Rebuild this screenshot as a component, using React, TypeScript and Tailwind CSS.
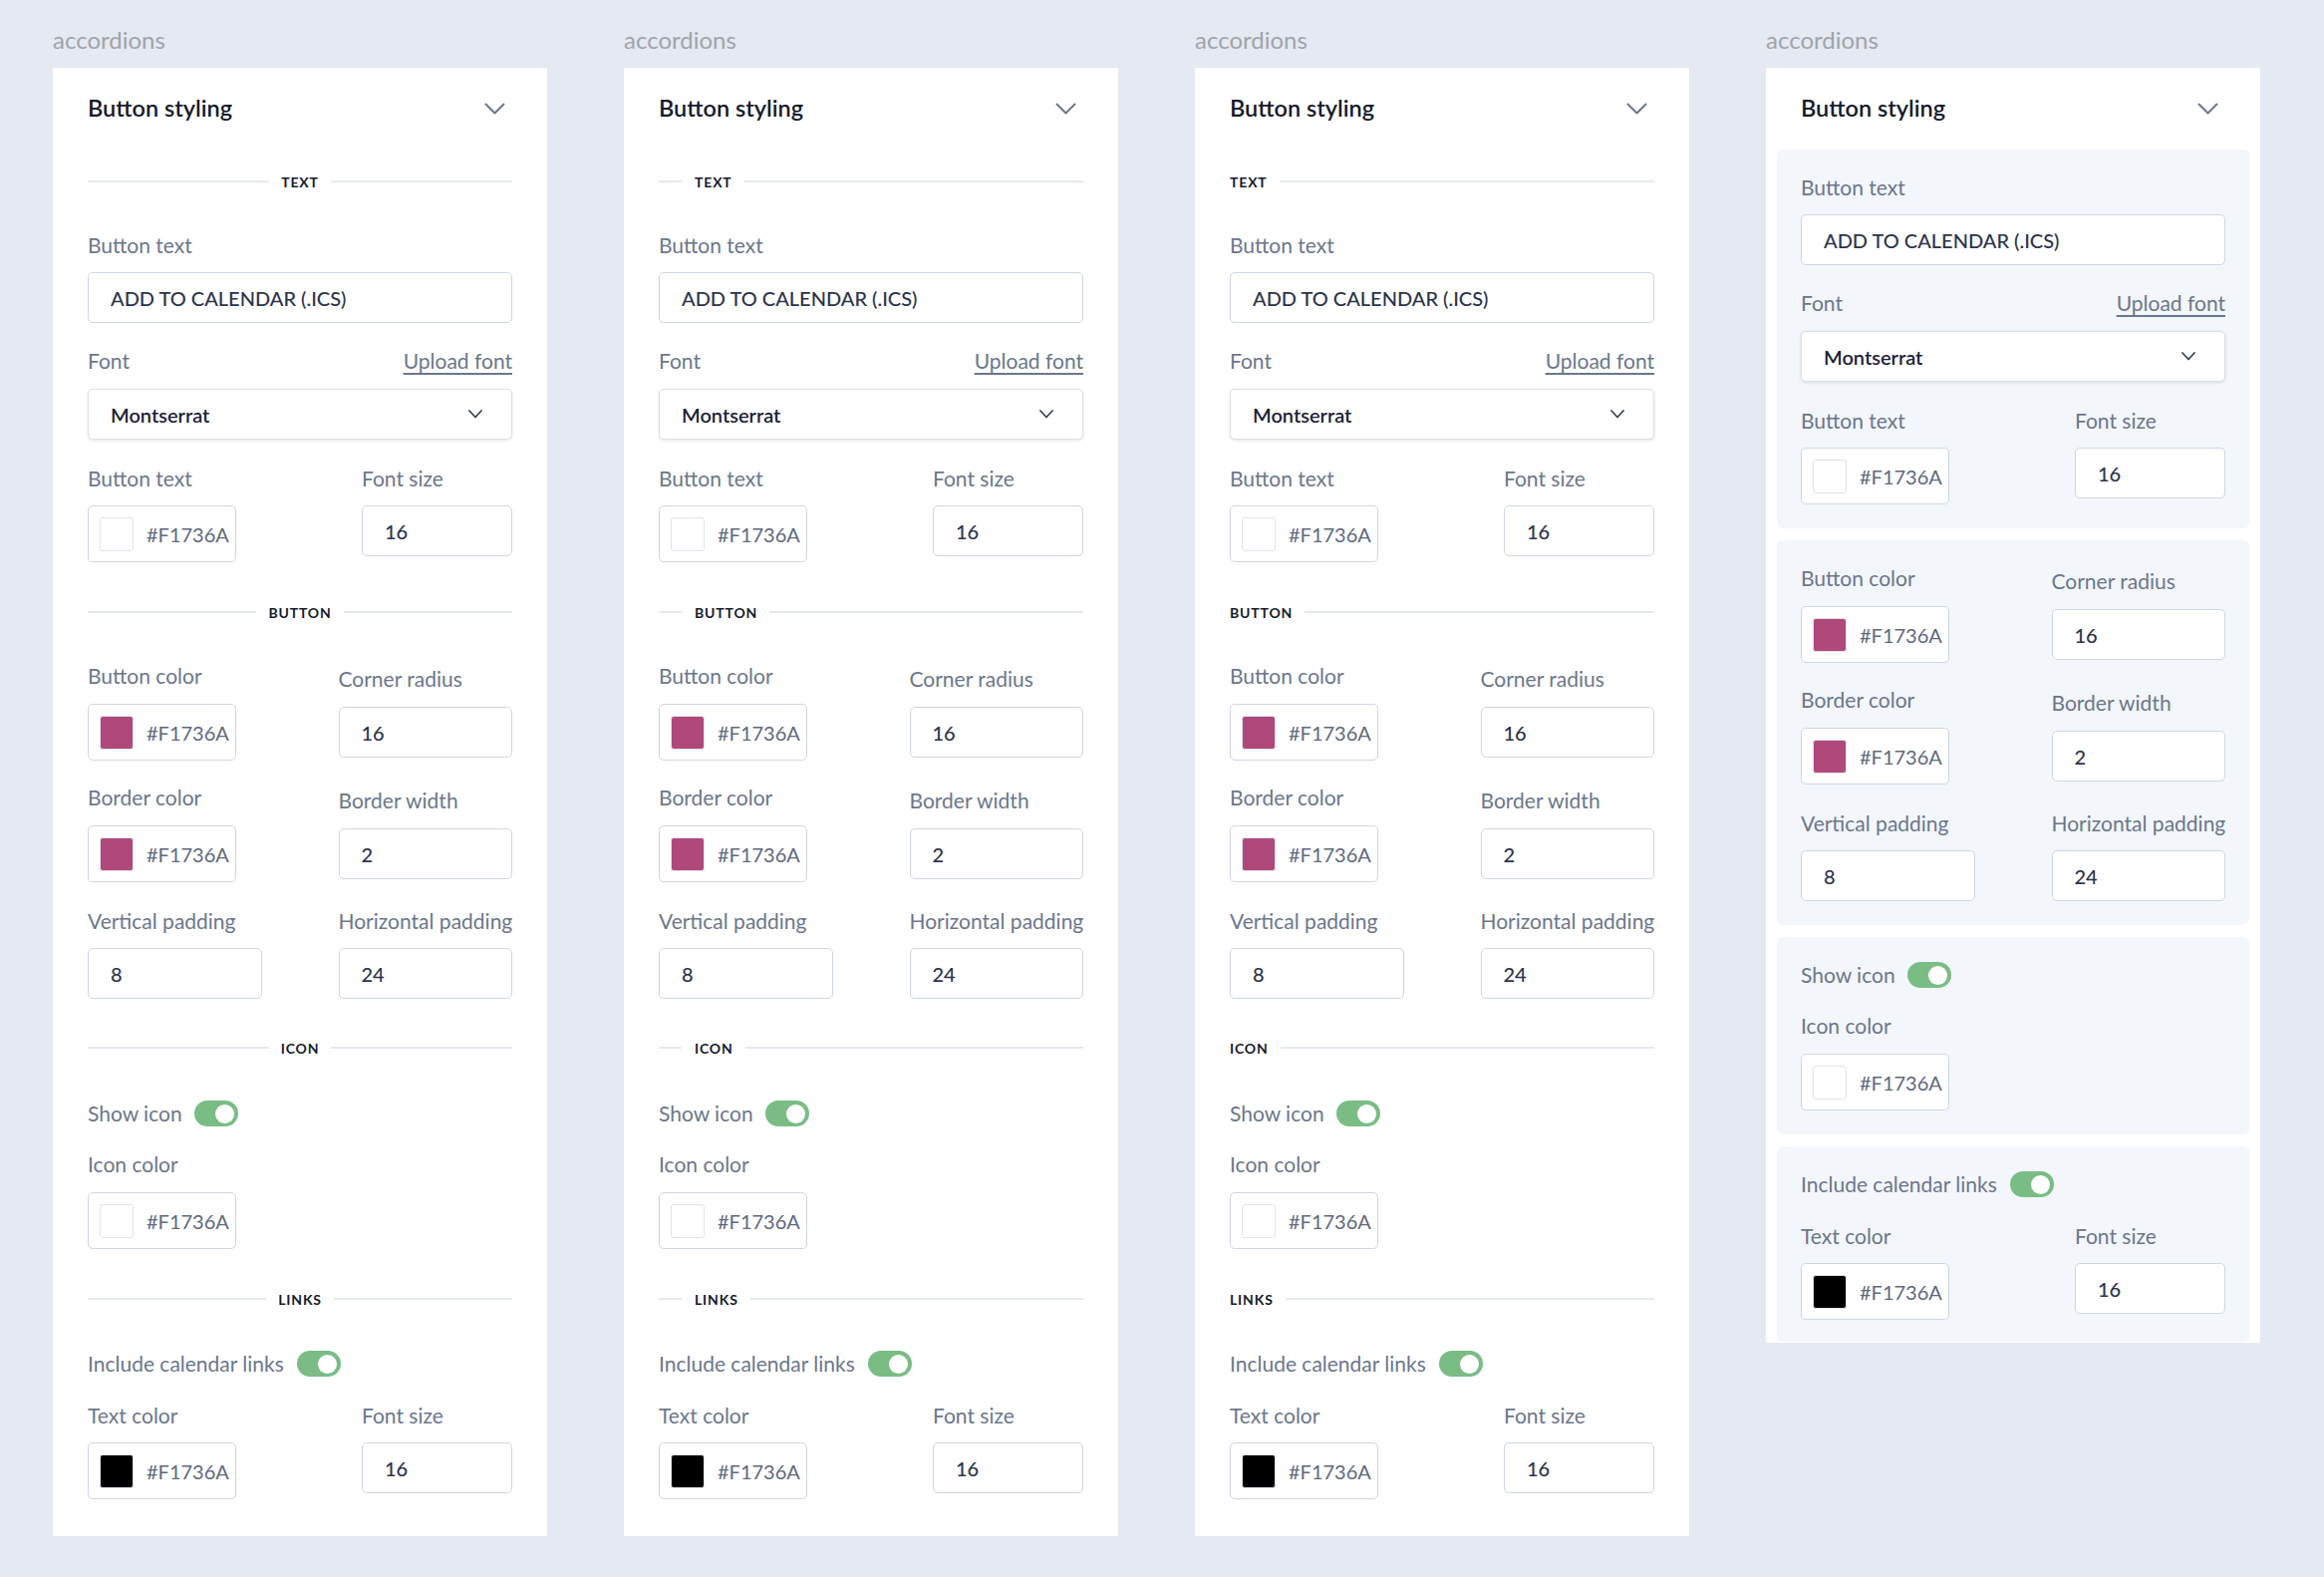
import type { ReactNode } from "react"

type Kind = "center" | "short" | "left"

const Label = ({ children, className = "" }: { children: ReactNode; className?: string }) => (
    <div className={"h-[24px] whitespace-nowrap text-[21px] leading-[24px] text-[#6b778c] " + className}>{children}</div>
)

const TextInput = ({ children, className = "" }: { children: ReactNode; className?: string }) => (
    <div
        className={
            "flex h-[51px] items-center rounded-[5px] border border-[#cfd6e5] bg-white px-[22px] text-[20px] font-medium text-[#2c344d] " +
            className
        }
    >
        {children}
    </div>
)

const ColorInput = ({ swatch, className = "" }: { swatch: string; className?: string }) => (
    <div
        className={
            "flex h-[57px] w-[149px] items-center gap-[13px] rounded-[5px] border border-[#cfd6e5] bg-white pl-[11px] " +
            className
        }
    >
        <span className={"h-[34px] w-[34px] rounded-[3px] border border-[#dfe4ee] " + swatch} />
        <span className="text-[20px] text-[#5f6a7e]">#F1736A</span>
    </div>
)

const Chevron = () => (
    <svg width="21" height="12" viewBox="0 0 21 12" fill="none">
        <polyline points="1.5,1.5 10.5,10.5 19.5,1.5" stroke="#6b778c" strokeWidth="2" strokeLinecap="round" strokeLinejoin="round" />
    </svg>
)

const Select = ({ className = "" }: { className?: string }) => (
    <div
        className={
            "flex h-[51px] items-center justify-between rounded-[5px] border border-[#dadfe8] bg-white pl-[22px] pr-[29px] shadow-[0_1px_3px_rgba(30,40,60,0.12)] " +
            className
        }
    >
        <span className="text-[20px] font-semibold text-[#1c2238]">Montserrat</span>
        <svg width="14" height="9" viewBox="0 0 14 9" fill="none">
            <polyline points="1,1 7,7.5 13,1" stroke="#3c4558" strokeWidth="1.8" strokeLinecap="round" strokeLinejoin="round" />
        </svg>
    </div>
)

const Toggle = () => (
    <div className="flex h-[26px] w-[44px] items-center justify-end rounded-full bg-[#79bd85] pr-[4px]">
        <div className="h-[19px] w-[19px] rounded-full bg-white" />
    </div>
)

const Divider = ({ kind, title, className = "" }: { kind: Kind; title: string; className?: string }) => (
    <div className={"flex h-[20px] items-center " + className}>
        {kind === "center" && <div className="mr-[12px] h-[2px] flex-1 bg-[#e4e9f2]" />}
        {kind === "short" && <div className="mr-[13px] h-[2px] w-[23px] bg-[#e4e9f2]" />}
        <span className="text-[14px] font-bold tracking-[0.06em] text-[#151b2d]">{title}</span>
        <div className="ml-[12px] h-[2px] flex-1 bg-[#e4e9f2]" />
    </div>
)

const Header = () => (
    <div className="flex h-[34px] items-center justify-between pr-[7px]">
        <span className="text-[23.5px] font-semibold text-[#151b2d]">Button styling</span>
        <Chevron />
    </div>
)

const TextFields = () => (
    <>
        <Label>Button text</Label>
        <TextInput className="mt-[15px]">ADD TO CALENDAR (.ICS)</TextInput>
        <div className="mt-[26px] flex justify-between">
            <Label>Font</Label>
            <span className="text-[21px] leading-[24px] text-[#6b778c] underline decoration-[1.5px] underline-offset-[4px]">
                Upload font
            </span>
        </div>
        <Select className="mt-[16px]" />
        <div className="mt-[27px] flex items-start justify-between">
            <div className="w-[149px]">
                <Label>Button text</Label>
                <ColorInput className="mt-[15px]" swatch="bg-white" />
            </div>
            <div className="w-[151px]">
                <Label>Font size</Label>
                <TextInput className="mt-[15px]">16</TextInput>
            </div>
        </div>
    </>
)

const ButtonFields = () => (
    <>
        <div className="grid grid-cols-2 items-center gap-x-[77px]">
            <div>
                <Label>Button color</Label>
                <ColorInput className="mt-[16px]" swatch="bg-[#b0497a]" />
            </div>
            <div>
                <Label>Corner radius</Label>
                <TextInput className="mt-[16px]">16</TextInput>
            </div>
        </div>
        <div className="mt-[25px] grid grid-cols-2 items-center gap-x-[77px]">
            <div>
                <Label>Border color</Label>
                <ColorInput className="mt-[16px]" swatch="bg-[#b0497a]" />
            </div>
            <div>
                <Label>Border width</Label>
                <TextInput className="mt-[16px]">2</TextInput>
            </div>
        </div>
        <div className="mt-[27px] grid grid-cols-2 gap-x-[77px]">
            <div>
                <Label>Vertical padding</Label>
                <TextInput className="mt-[15px]">8</TextInput>
            </div>
            <div>
                <Label>Horizontal padding</Label>
                <TextInput className="mt-[15px]">24</TextInput>
            </div>
        </div>
    </>
)

const IconFields = () => (
    <>
        <div className="flex items-center gap-[12px]">
            <span className="text-[21px] leading-[24px] text-[#6b778c]">Show icon</span>
            <Toggle />
        </div>
        <Label className="mt-[26px]">Icon color</Label>
        <ColorInput className="mt-[16px]" swatch="bg-white" />
    </>
)

const LinkFields = () => (
    <>
        <div className="flex items-center gap-[13px]">
            <span className="text-[21px] leading-[24px] text-[#6b778c]">Include calendar links</span>
            <Toggle />
        </div>
        <div className="mt-[27px] flex items-start justify-between">
            <div className="w-[149px]">
                <Label>Text color</Label>
                <ColorInput className="mt-[15px]" swatch="bg-black" />
            </div>
            <div className="w-[151px]">
                <Label>Font size</Label>
                <TextInput className="mt-[15px]">16</TextInput>
            </div>
        </div>
    </>
)

const FlatPanel = ({ kind }: { kind: Kind }) => (
    <div className="bg-white px-[35px] pb-[37px] pt-[24px]">
        <Header />
        <Divider kind={kind} title="TEXT" className="mt-[46px]" />
        <div className="mt-[42px]">
            <TextFields />
        </div>
        <Divider kind={kind} title="BUTTON" className="mt-[40px]" />
        <div className="mt-[42px]">
            <ButtonFields />
        </div>
        <Divider kind={kind} title="ICON" className="mt-[39px]" />
        <div className="mt-[43px]">
            <IconFields />
        </div>
        <Divider kind={kind} title="LINKS" className="mt-[40px]" />
        <div className="mt-[42px]">
            <LinkFields />
        </div>
    </div>
)

const BoxedPanel = () => (
    <div className="bg-white px-[11px] pb-[1px] pt-[24px]">
        <div className="px-[24px]">
            <Header />
        </div>
        <div className="mt-[24px] flex flex-col gap-[12px]">
            <div className="rounded-[6px] bg-[#f3f6fb] px-[24px] pb-[24px] pt-[26px]">
                <TextFields />
            </div>
            <div className="rounded-[6px] bg-[#f3f6fb] px-[24px] pb-[24px] pt-[26px]">
                <ButtonFields />
            </div>
            <div className="rounded-[6px] bg-[#f3f6fb] px-[24px] pb-[24px] pt-[25px]">
                <IconFields />
            </div>
            <div className="rounded-[6px] bg-[#f3f6fb] px-[24px] pb-[22px] pt-[25px]">
                <LinkFields />
            </div>
        </div>
    </div>
)

const Column = ({ children }: { children: ReactNode }) => (
    <div className="w-[496px]">
        <div className="pt-[26px] text-[24px] leading-[28px] text-[#a0a4ab]">accordions</div>
        <div className="mt-[14px]">{children}</div>
    </div>
)

export default function App() {
    return (
        <div className="min-h-screen bg-[#e5e9f1] [font-family:Lato,sans-serif]">
            <div className="flex items-start gap-[77px] pl-[53px]">
                <Column>
                    <FlatPanel kind="center" />
                </Column>
                <Column>
                    <FlatPanel kind="short" />
                </Column>
                <Column>
                    <FlatPanel kind="left" />
                </Column>
                <Column>
                    <BoxedPanel />
                </Column>
            </div>
        </div>
    )
}
